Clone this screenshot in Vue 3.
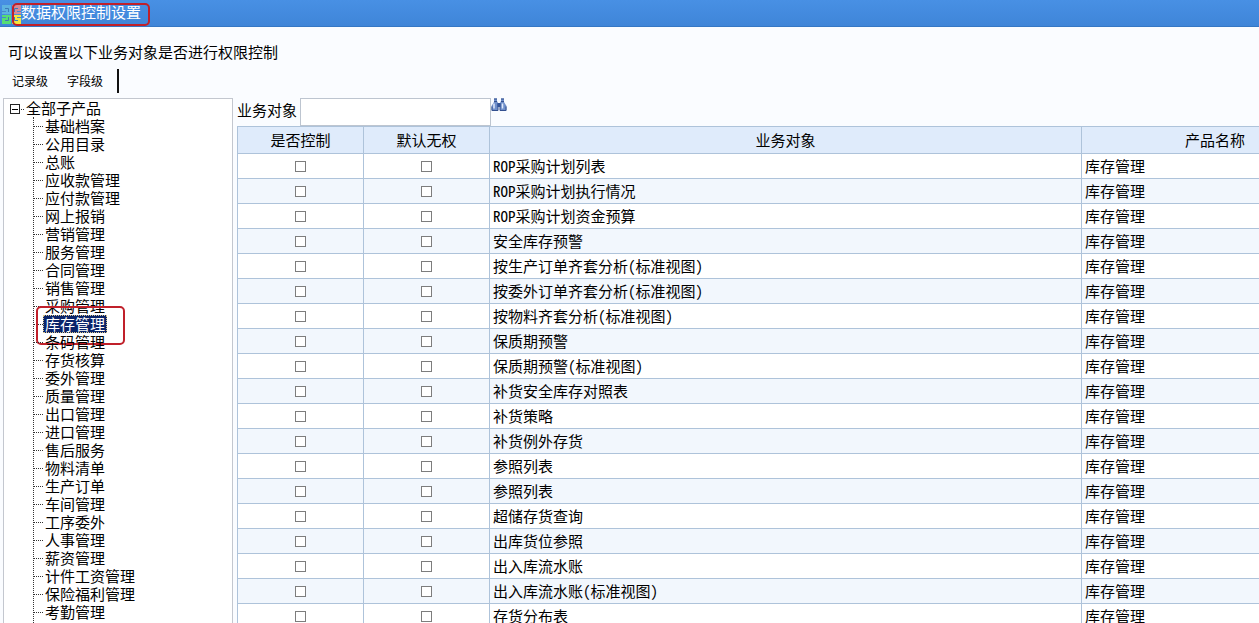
<script setup>
import { ref } from 'vue'

const modules = [
  '基础档案', '公用目录', '总账', '应收款管理', '应付款管理', '网上报销', '营销管理',
  '服务管理', '合同管理', '销售管理', '采购管理', '库存管理', '条码管理', '存货核算',
  '委外管理', '质量管理', '出口管理', '进口管理', '售后服务', '物料清单', '生产订单',
  '车间管理', '工序委外', '人事管理', '薪资管理', '计件工资管理', '保险福利管理', '考勤管理',
]
const selected = ref('库存管理')
const keyword = ref('')

const rows = ref([
  'ROP采购计划列表', 'ROP采购计划执行情况', 'ROP采购计划资金预算', '安全库存预警',
  '按生产订单齐套分析(标准视图)', '按委外订单齐套分析(标准视图)', '按物料齐套分析(标准视图)',
  '保质期预警', '保质期预警(标准视图)', '补货安全库存对照表', '补货策略', '补货例外存货',
  '参照列表', '参照列表', '超储存货查询', '出库货位参照', '出入库流水账',
  '出入库流水账(标准视图)', '存货分布表',
].map((name) => ({ name, product: '库存管理', controlled: false, denied: false })))
</script>

<template>
  <div class="page">
    <header class="titlebar">
      <svg class="logo" width="19" height="19" viewBox="0 0 19 19" fill="none">
        <path d="M0 0h9v9H0z" fill="#5db2e0" />
        <path d="M10 0h9v9h-9z" fill="#d58a98" />
        <path d="M0 10h9v9H0z" fill="#55dc74" />
        <path d="M10 10h9v9h-9z" fill="#f3e63e" />
        <path d="M3 3.5h3.5V7M16 3.5h-3.5V7M3 15.5h3.5V12M16 15.5h-3.5V12" stroke="#3c78b8" stroke-width="1" />
        <path d="M0 6.5h4M15 6.5h4M0 12.5h4M15 12.5h4" stroke="#4a86cc" stroke-width="1" />
        <path d="M9.5 3v13M3 9.5h13" stroke="#4f8fd8" stroke-width="1" />
      </svg>
      <h1>数据权限控制设置<span class="mark mark-title"></span></h1>
    </header>

    <p class="hint">可以设置以下业务对象是否进行权限控制</p>

    <nav class="tabs">
      <button type="button">记录级</button>
      <button type="button">字段级</button>
      <span class="caret"></span>
    </nav>

    <main class="body">
      <aside class="tree">
        <button type="button" class="root">
          <svg width="16" height="11" viewBox="0 0 16 11" shape-rendering="crispEdges">
            <rect x="0.5" y="1.5" width="9" height="9" fill="#fff" stroke="#222" />
            <path d="M2 6.5h6" stroke="#000" />
            <path d="M11 6.5h1M13 6.5h1" stroke="#333" />
          </svg>
          <span>全部子产品</span>
        </button>
        <ul>
          <li v-for="m in modules" :key="m">
            <button type="button" :class="{ active: m === selected }" @click="selected = m">{{ m }}</button>
            <span v-if="m === '库存管理'" class="mark mark-node"></span>
          </li>
        </ul>
      </aside>

      <section class="content">
        <form class="search" @submit.prevent>
          <label for="keyword">业务对象</label>
          <input id="keyword" v-model="keyword" type="text">
          <button type="submit" aria-label="查询">
            <svg width="16" height="14" viewBox="0 0 16 14">
              <path d="M3 .5h3v2.500l1 2V12.500H.5V8L3 4zM10 .5h3V4l2.500 4v4.500H9V5l1-2z" fill="#6f8fca" />
              <path d="M6.500 5h3v4h-3z" fill="#34579c" />
              <path d="M3 5.500v5M11.500 5.500v5" stroke="#dfe9fa" stroke-width="1.500" />
              <path d="M3 1h3M10 1h3M3 3.500h3M10 3.500h3M1 8.500v4h6v-7M15 8.500v4H9v-7" fill="none" stroke="#33508f" />
            </svg>
          </button>
        </form>

        <table>
          <colgroup>
            <col class="col-flag">
            <col class="col-flag">
            <col>
            <col class="col-product">
          </colgroup>
          <thead>
            <tr>
              <th>是否控制</th>
              <th>默认无权</th>
              <th>业务对象</th>
              <th>产品名称</th>
            </tr>
          </thead>
          <tbody>
            <tr v-for="(row, i) in rows" :key="i">
              <td class="flag"><input v-model="row.controlled" type="checkbox" :aria-label="row.name + ' 是否控制'"></td>
              <td class="flag"><input v-model="row.denied" type="checkbox" :aria-label="row.name + ' 默认无权'"></td>
              <td>{{ row.name }}</td>
              <td>{{ row.product }}</td>
            </tr>
          </tbody>
        </table>
      </section>
    </main>
  </div>
</template>

<style>
body {
  margin: 0;
  background: #fafcff;
}
</style>

<style scoped>
.page {
  display: flex;
  flex-direction: column;
  height: 100vh;
  overflow: hidden;
  color: #000;
  font: 400 15px/18px "Noto Sans CJK SC", sans-serif;
  font-feature-settings: "hwid";
}
button,
input {
  margin: 0;
  padding: 0;
  border: 0;
  background: none;
  color: inherit;
  font: inherit;
  box-sizing: border-box;
}
.titlebar {
  display: flex;
  align-items: flex-start;
  flex: none;
  height: 27px;
  box-sizing: border-box;
  padding: 3px 0 0 2px;
  background: linear-gradient(#4890e4, #3f85d8);
  border-bottom: 1px solid #3577c4;
  color: #fff;
}
.logo {
  flex: none;
  margin-top: 2px;
}
h1 {
  position: relative;
  margin: 0;
  font: inherit;
}
.mark {
  position: absolute;
  box-sizing: border-box;
  border: 2px solid #c0202a;
  border-radius: 5px;
  pointer-events: none;
}
.mark-title {
  inset: 0 -9px -5px -9px;
}
.mark-node {
  left: 2px;
  top: -9px;
  width: 89px;
  height: 39px;
}
.hint {
  margin: 0;
  padding: 16px 8px 0;
}
.tabs {
  display: flex;
  align-items: center;
  gap: 19px;
  height: 24px;
  padding: 8px 12px 5px;
  font-size: 12px;
}
.tabs .caret {
  width: 2px;
  height: 24px;
  margin-left: -5px;
  background: #111;
}
.body {
  display: flex;
  flex: 1;
  gap: 4px;
  min-height: 0;
  padding-left: 3px;
}
.tree {
  flex: none;
  width: 230px;
  box-sizing: border-box;
  border: 1px solid #c3c7cf;
  border-bottom: 0;
  background: #fff;
  overflow: hidden;
}
.root {
  display: flex;
  align-items: center;
  height: 18px;
  padding-left: 6px;
}
.tree ul {
  margin: 0;
  padding: 0 0 18px;
  margin-left: 29px;
  border-left: 1px dotted #333;
  list-style: none;
}
.tree li {
  position: relative;
  display: flex;
  align-items: center;
  height: 18px;
}
.tree li::before {
  content: "";
  width: 9px;
  border-top: 1px dotted #333;
}
.tree li button {
  height: 18px;
  padding: 0 1px;
  border: 1px solid transparent;
  line-height: 16px;
}
.tree li .active {
  background: #0a246a;
  border: 1px dotted #d8c48a;
  color: #fff;
}
.content {
  flex: 1;
  min-width: 0;
  overflow: hidden;
}
.search {
  display: flex;
  align-items: flex-start;
  height: 28px;
}
.search label {
  padding: 3px 3px 0 0;
  line-height: 18px;
}
.search input {
  width: 191px;
  height: 28px;
  padding: 0 4px;
  border: 1px solid #bdc5d0;
  background: #fff;
}
.search button,
.search svg {
  display: block;
}
table {
  width: calc(100% + 90px);
  table-layout: fixed;
  border-collapse: collapse;
  background: #fff;
}
.col-flag {
  width: 126px;
}
.col-product {
  width: 267px;
}
th,
td {
  height: 24px;
  padding: 0 4px 0 3px;
  border: 1px solid #aec3da;
  line-height: 22px;
  text-align: left;
  white-space: nowrap;
}
th {
  height: 26px;
  padding: 0;
  background: #dfebfb;
  font-weight: inherit;
  text-align: center;
}
tbody tr:nth-child(even) {
  background: #f2f7fd;
}
.flag {
  padding: 0;
  text-align: center;
}
.flag input {
  appearance: none;
  display: block;
  width: 11px;
  height: 11px;
  margin: 0 auto;
  border: 1px solid #7d7d7d;
  background: #fff;
}
.flag input:checked {
  background: #34579c;
}
</style>
